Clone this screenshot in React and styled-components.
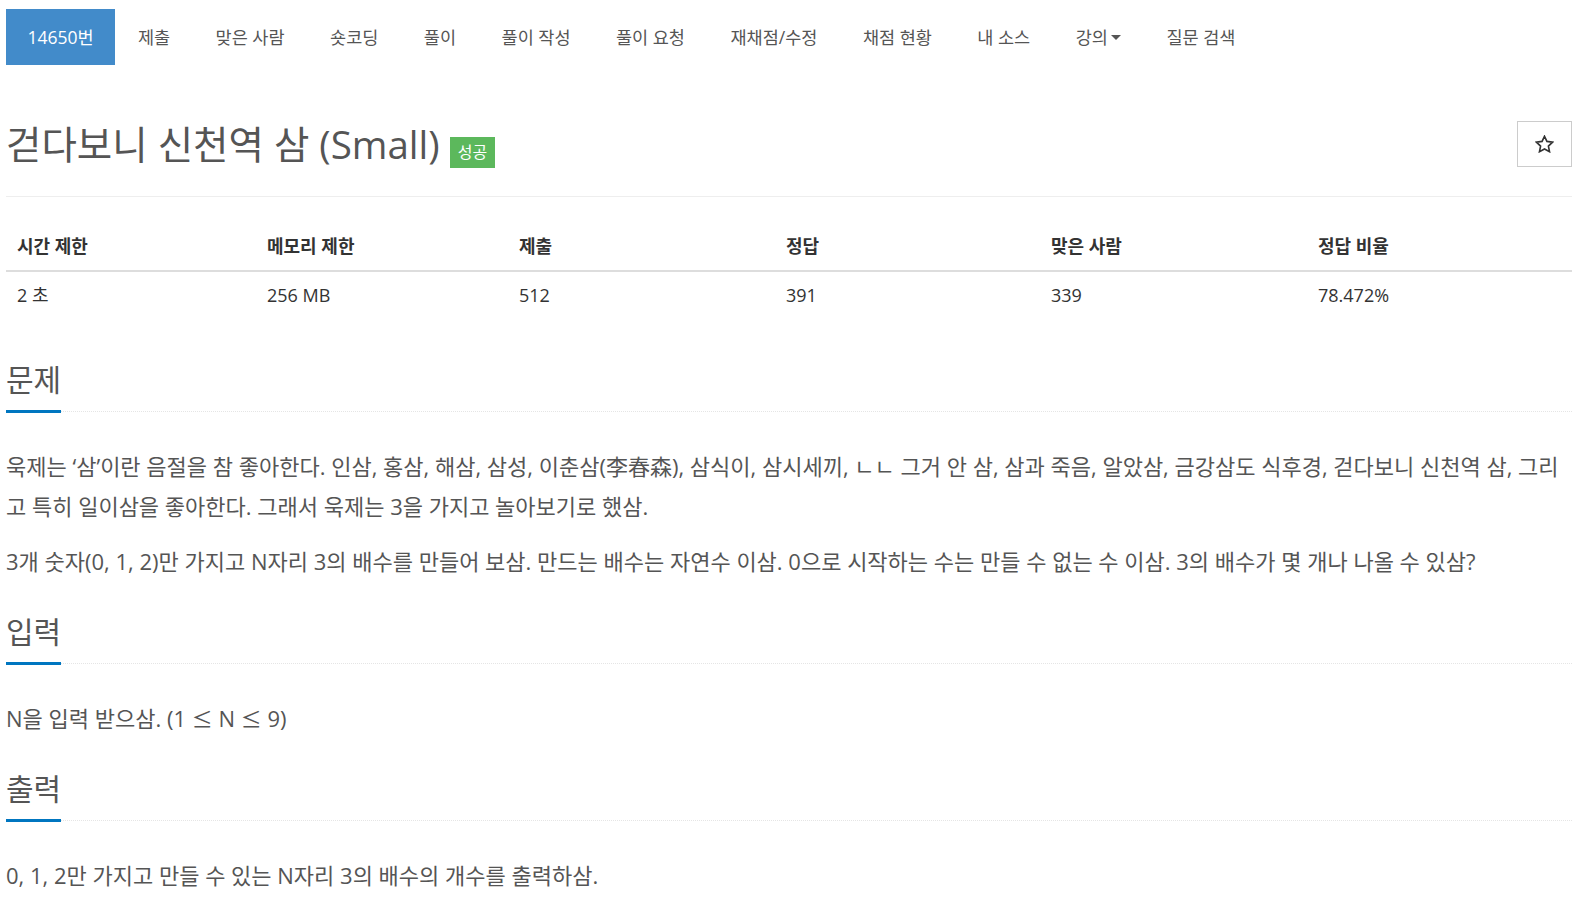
import { createGlobalStyle, styled } from "styled-components";

const GlobalStyle = createGlobalStyle`
  body {
    margin: 0;
    background: #fff;
    font-family: "Open Sans", "Noto Sans CJK KR", sans-serif;
    color: #333;
  }
`;

const Page = styled.div`
  padding: 9px 16px 0 6px;
`;

const Nav = styled.ul`
  display: flex;
  list-style: none;
  margin: 0;
  padding: 0;
`;

const NavItem = styled.li`
  height: 56px;
  box-sizing: border-box;
  padding: 0 ${(p) => (p.active ? "21.5px" : "22.75px")} 2px;
  font-size: 17.5px;
  color: ${(p) => (p.active ? "#fff" : "#555")};
  background: ${(p) => (p.active ? "#428bca" : "transparent")};
  cursor: pointer;
  display: flex;
  align-items: center;
`;

const Caret = styled.span`
  display: inline-block;
  width: 0;
  height: 0;
  margin-left: 3px;
  margin-top: 2px;
  border-top: 5px solid #555;
  border-left: 5px solid transparent;
  border-right: 5px solid transparent;
`;

const PageHeader = styled.div`
  display: flex;
  justify-content: space-between;
  align-items: center;
  margin-top: 55px;
  padding-bottom: 28px;
  border-bottom: 1px solid #eee;
`;

const Title = styled.h1`
  display: flex;
  align-items: center;
  margin: 0;
  font-size: 38.5px;
  font-weight: 400;
  color: #555;
  line-height: 45px;
`;

const Badge = styled.span`
  display: inline-block;
  margin-left: 10px;
  margin-top: 17px;
  padding: 0 8px;
  height: 31px;
  line-height: 31px;
  font-size: 16px;
  color: #fff;
  background: #5cb85c;
`;

const StarButton = styled.button`
  display: flex;
  align-items: center;
  justify-content: center;
  width: 55px;
  height: 46px;
  border: 1px solid #ccc;
  background: #fff;
  color: #333;
  padding: 0 0 1px;
  cursor: pointer;
`;

const InfoTable = styled.div`
  display: grid;
  grid-template-columns: 250px 252px 267px 265px 267px 1fr;
  margin: 26px 0 0;
`;

const HeadCell = styled.div`
  height: 47px;
  line-height: 47px;
  padding-left: 11px;
  font-size: 18px;
  font-weight: 700;
  color: #333;
  border-bottom: 2px solid #ddd;
`;

const Cell = styled.div`
  height: 46px;
  line-height: 46px;
  padding-left: 11px;
  font-size: 18px;
  color: #333;
`;

const Section = styled.section`
  margin-top: ${(p) => (p.first ? "42px" : "31px")};
`;

const Headline = styled.div`
  border-bottom: 1px dotted #e5e5e5;
`;

const HeadlineText = styled.h2`
  display: inline-block;
  margin: 0 0 -2px;
  padding-bottom: 10px;
  font-size: 30px;
  font-weight: 400;
  line-height: 40px;
  color: #555;
  border-bottom: 3px solid #0076c0;
`;

const Content = styled.div`
  margin-top: 34px;
  font-size: 22px;
  line-height: 40px;
  color: #555;
  word-break: break-all;
`;

const Para = styled.p`
  margin: 0 0 15px;
  &:last-child {
    margin-bottom: 0;
  }
`;

const MathSym = styled.span`
  font-family: "Noto Sans CJK KR", sans-serif;
  font-size: 21px;
`;

function StarIcon() {
  return (
    <svg width="19" height="18" viewBox="0 0 24 23">
      <path
        d="M12 1.6l3.1 6.6 7.2.9-5.3 5 1.4 7.2L12 17.8l-6.4 3.5 1.4-7.2-5.3-5 7.2-.9z"
        fill="none"
        stroke="#333"
        strokeWidth="2.1"
        strokeLinejoin="miter"
      />
    </svg>
  );
}

const navItems = [
  "제출",
  "맞은 사람",
  "숏코딩",
  "풀이",
  "풀이 작성",
  "풀이 요청",
  "재채점/수정",
  "채점 현황",
  "내 소스",
];

const headers = ["시간 제한", "메모리 제한", "제출", "정답", "맞은 사람", "정답 비율"];
const values = ["2 초", "256 MB", "512", "391", "339", "78.472%"];

export default function App() {
  return (
    <Page>
      <GlobalStyle />
      <Nav>
        <NavItem active>14650번</NavItem>
        {navItems.map((item) => (
          <NavItem key={item}>{item}</NavItem>
        ))}
        <NavItem>
          강의
          <Caret />
        </NavItem>
        <NavItem>질문 검색</NavItem>
      </Nav>

      <PageHeader>
        <Title>
          걷다보니 신천역 삼 (Small)
          <Badge>성공</Badge>
        </Title>
        <StarButton>
          <StarIcon />
        </StarButton>
      </PageHeader>

      <InfoTable>
        {headers.map((h) => (
          <HeadCell key={h}>{h}</HeadCell>
        ))}
        {values.map((v) => (
          <Cell key={v}>{v}</Cell>
        ))}
      </InfoTable>

      <Section first>
        <Headline>
          <HeadlineText>문제</HeadlineText>
        </Headline>
        <Content>
          <Para>
            욱제는 ‘삼’이란 음절을 참 좋아한다. 인삼, 홍삼, 해삼, 삼성, 이춘삼(李春森), 삼식이, 삼시세끼, ㄴㄴ 그거 안 삼, 삼과 죽음, 알았삼, 금강삼도 식후경, 걷다보니 신천역 삼, 그리고 특히 일이삼을 좋아한다. 그래서 욱제는 3을 가지고 놀아보기로 했삼.
          </Para>
          <Para>
            3개 숫자(0, 1, 2)만 가지고 N자리 3의 배수를 만들어 보삼. 만드는 배수는 자연수 이삼. 0으로 시작하는 수는 만들 수 없는 수 이삼. 3의 배수가 몇 개나 나올 수 있삼?
          </Para>
        </Content>
      </Section>

      <Section>
        <Headline>
          <HeadlineText>입력</HeadlineText>
        </Headline>
        <Content>
          <Para>
            N을 입력 받으삼. (1 <MathSym>≤</MathSym> N <MathSym>≤</MathSym> 9)
          </Para>
        </Content>
      </Section>

      <Section>
        <Headline>
          <HeadlineText>출력</HeadlineText>
        </Headline>
        <Content>
          <Para>0, 1, 2만 가지고 만들 수 있는 N자리 3의 배수의 개수를 출력하삼.</Para>
        </Content>
      </Section>
    </Page>
  );
}
